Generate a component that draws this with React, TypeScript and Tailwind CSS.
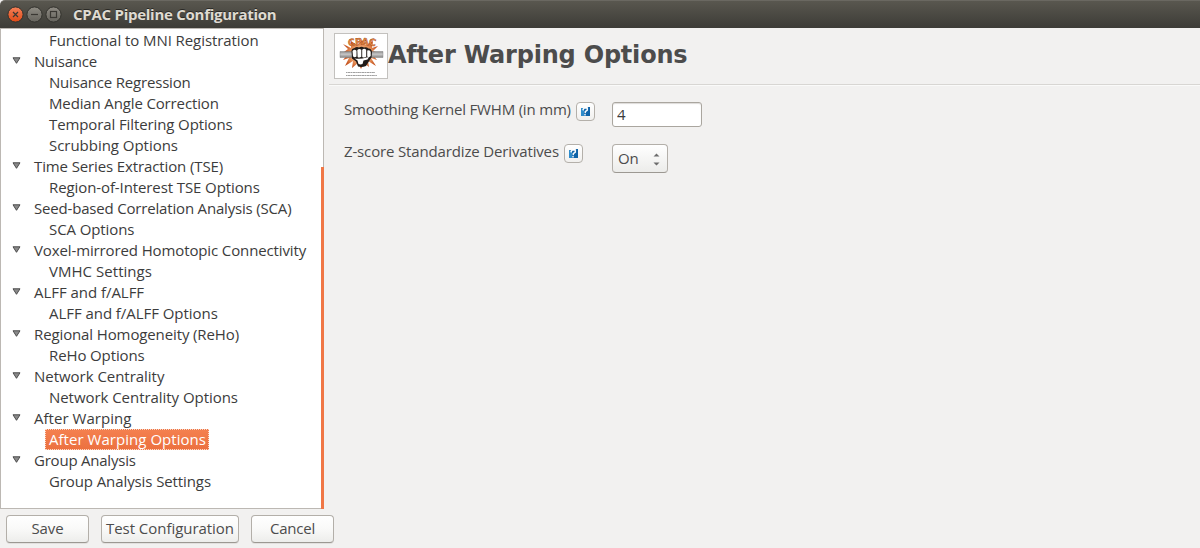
type TreeItem = { label: string; tracking: string; group?: boolean; selected?: boolean };

const items: TreeItem[] = [
  { label: "Functional to MNI Registration", tracking: "tracking-[-0.07px]" },
  { label: "Nuisance", tracking: "tracking-[-0.2px]", group: true },
  { label: "Nuisance Regression", tracking: "tracking-[-0.19px]" },
  { label: "Median Angle Correction", tracking: "tracking-[-0.14px]" },
  { label: "Temporal Filtering Options", tracking: "tracking-[-0.11px]" },
  { label: "Scrubbing Options", tracking: "tracking-[-0.03px]" },
  { label: "Time Series Extraction (TSE)", tracking: "tracking-[-0.12px]", group: true },
  { label: "Region-of-Interest TSE Options", tracking: "tracking-[-0.1px]" },
  { label: "Seed-based Correlation Analysis (SCA)", tracking: "tracking-[-0.18px]", group: true },
  { label: "SCA Options", tracking: "tracking-[-0.09px]" },
  { label: "Voxel-mirrored Homotopic Connectivity", tracking: "tracking-[-0.12px]", group: true },
  { label: "VMHC Settings", tracking: "tracking-[0.04px]" },
  { label: "ALFF and f/ALFF", tracking: "tracking-[-0.04px]", group: true },
  { label: "ALFF and f/ALFF Options", tracking: "tracking-[-0.05px]" },
  { label: "Regional Homogeneity (ReHo)", tracking: "tracking-[-0.12px]", group: true },
  { label: "ReHo Options", tracking: "tracking-[-0.12px]" },
  { label: "Network Centrality", tracking: "tracking-[-0.03px]", group: true },
  { label: "Network Centrality Options", tracking: "tracking-[-0.05px]" },
  { label: "After Warping", tracking: "tracking-[0.04px]", group: true },
  { label: "After Warping Options", tracking: "tracking-[0.04px]", selected: true },
  { label: "Group Analysis", tracking: "tracking-[-0.22px]", group: true },
  { label: "Group Analysis Settings", tracking: "tracking-[-0.1px]" },
];

function WindowButton({ kind }: { kind: "close" | "min" | "max" }) {
  const close = kind === "close";
  return (
    <svg width="17" height="17" viewBox="0 0 17 17" aria-hidden="true">
      <defs>
        <linearGradient id={"wb-" + kind} x1="0" y1="0" x2="0" y2="1">
          <stop offset="0" stopColor={close ? "#f58159" : "#8f8c84"} />
          <stop offset="1" stopColor={close ? "#df4a16" : "#65635c"} />
        </linearGradient>
      </defs>
      <circle cx="8.5" cy="8.5" r="7.6" fill={`url(#wb-${kind})`} stroke="#33322d" strokeWidth="1" />
      <g stroke="#3a3833" strokeWidth="1.2" fill="none">
        {close && <path d="M6 6l5 5M11 6l-5 5" />}
        {kind === "min" && <path d="M5 8.5h7" />}
        {kind === "max" && <rect x="5.5" y="5.5" width="6" height="6" />}
      </g>
    </svg>
  );
}

const logoLetters = [
  { ch: "C", x: 14, y: 13, turn: -12 },
  { ch: "P", x: 21, y: 12, turn: -4 },
  { ch: "A", x: 27.5, y: 12, turn: 4 },
  { ch: "C", x: 35, y: 12.5, turn: 10 },
];

function Logo() {
  return (
    <svg width="54" height="46" viewBox="0 0 54 46" className="shrink-0" aria-hidden="true">
      <defs>
        <linearGradient id="bar" x1="0" y1="0" x2="0" y2="1">
          <stop offset="0" stopColor="#8a8a8a" />
          <stop offset="0.45" stopColor="#c8c8c8" />
          <stop offset="1" stopColor="#858585" />
        </linearGradient>
        <radialGradient id="burst">
          <stop offset="0" stopColor="#f7b27e" />
          <stop offset="0.55" stopColor="#eda06a" />
          <stop offset="1" stopColor="#c4501b" />
        </radialGradient>
      </defs>
      <rect x="0.5" y="0.5" width="53" height="45" fill="#fff" stroke="#c3c1be" />
      <path
        d="M9 11l8 4 0-7 6 4 5-5 4 5 7-4-1 7 6-2-5 5 6 2-6 2 4 5-6-2 5 8-8-5 1 6-5-4-3 6-3-6-6 5 1-7-8 5 4-8-6 2 5-6-4-2 4-3z"
        fill="url(#burst)"
      />
      <path d="M6 18.500h13v6H6zM37 18.500h12v6H37z" fill="url(#bar)" stroke="#777" strokeWidth="0.4" />
      <path
        d="M17.500 18q0-2.500 3-3 2-1.500 4.500-.5 2.500-1.500 5 0 2.500-.8 4.500 1 3.500.3 3.500 4l-.5 5-3 4.500-2.500 4q-4 1.500-8 .5l-2-5-4-3z"
        fill="#211b18"
      />
      <path
        d="M18.500 18q2-2.500 4-.3v5.800q-2 1.500-3.500-.3zM23.300 17q2-2 4-.2v7q-2 1.300-3.700.2zM28.200 16.800q2-2 4 0v7q-2 1.300-4 .2zM33.200 17.500q3-1 3.500 1.500v4q-1.500 2-3.500.5zM20.500 25.500q6 1 12-1l2.500-.5-1.500 2.500-4 1 -1 3.500q-2 .8-4 0l-1-3.500z"
        fill="#fff"
      />
      <g
        fontFamily="DejaVu Sans, sans-serif"
        fontWeight="bold"
        fontSize="9.5"
        fill="#ef8b45"
        stroke="#8a431a"
        strokeWidth="0.4"
      >
        {logoLetters.map((l) => (
          <text key={l.x} x={l.x} y={l.y} transform={`rotate(${l.turn} ${l.x + 3} ${l.y - 3})`}>
            {l.ch}
          </text>
        ))}
      </g>
      <path d="M12 39.500h29M12 42.500h31" stroke="#a0a0a0" strokeWidth="1" strokeDasharray="1.500 0.400 2.500 0.300" />
    </svg>
  );
}

function HelpButton() {
  return (
    <button
      type="button"
      aria-label="Help"
      className="flex h-[19px] w-[19px] items-center justify-center rounded-[4px] border border-[#b4b0aa] bg-linear-to-b from-white to-[#f1f0ee]"
    >
      <svg width="11" height="11" viewBox="0 0 11 11">
        <path d="M1 2h3v8H1z" fill="#2f8ccb" />
        <path d="M4 2.500L7 1h3v9H4z" fill="#0f63a8" />
        <path d="M2.800 4.300L4 2h3.300v2.200L5.300 5.700v1.500M5 8v1.500" fill="none" stroke="#f4f8fb" strokeWidth="1.500" />
        <path d="M4.500 1.500h3" stroke="#fff" strokeWidth="1" />
      </svg>
    </button>
  );
}

function PushButton({ label, size }: { label: string; size: string }) {
  return (
    <button
      type="button"
      className={`flex h-[28px] items-center justify-center rounded-[4px] border border-[#b3afa9] border-b-[#9c9892] bg-linear-to-b from-white via-[#f9f9f8] to-[#ededeb] pb-px whitespace-nowrap shadow-[0_1px_0_#e2e0de] ${size}`}
    >
      {label}
    </button>
  );
}

export default function App() {
  return (
    <div className="flex h-[548px] w-[1200px] flex-col overflow-hidden bg-[#f2f1f0] font-['Open_Sans',sans-serif] text-[15px] text-[#3c3c3c]">
      <header className="flex h-[28px] shrink-0 items-center rounded-tl-[5px] border-t border-[#6a6861] bg-linear-to-b from-[#59574f] to-[#3d3c37] pl-[7px]">
        <div className="flex gap-[2px]">
          <WindowButton kind="close" />
          <WindowButton kind="min" />
          <WindowButton kind="max" />
        </div>
        <h1 className="ml-[11px] font-bold tracking-[-0.26px] whitespace-nowrap text-[#dfdbd2] [text-shadow:0_-1px_0_#2a2925]">
          CPAC Pipeline Configuration
        </h1>
      </header>

      <div className="flex h-[481px] shrink-0">
        <nav className="flex w-[324px] shrink-0 border-t border-b border-l border-[#bcb8b3] bg-white">
          <ul className="w-[320px] pt-px">
            {items.map((item) => (
              <li key={item.label} className={`flex h-[21px] items-center whitespace-nowrap ${item.tracking}`}>
                {item.group ? (
                  <>
                    <svg width="9" height="7" viewBox="0 0 9 7" className="mb-[3px] ml-[11px] shrink-0" aria-hidden="true">
                      <path d="M1 .8h7L4.500 6.300z" fill="#8a8a8a" stroke="#4c4c4c" strokeWidth="1" />
                    </svg>
                    <span className="ml-[13px] leading-[21px]">{item.label}</span>
                  </>
                ) : item.selected ? (
                  <span className="ml-[44px] h-[21px] w-[164px] border border-dotted border-[#fbd9c9] bg-linear-to-b from-[#f4804f] to-[#ec7140] pl-[3px] leading-[19px] text-white">
                    {item.label}
                  </span>
                ) : (
                  <span className="ml-[48px] leading-[21px]">{item.label}</span>
                )}
              </li>
            ))}
          </ul>
          <div className="-mb-px flex w-[3px] flex-col">
            <div className="h-[138px] border-r border-[#bcb8b3]" />
            <div className="flex-1 bg-[#f07746]" />
          </div>
        </nav>

        <main className="ml-[5px] flex-1">
          <div className="flex h-[57px] border-b border-[#d8d6d3] pt-[5px] pl-[5px]">
            <Logo />
            <h2 className="font-['DejaVu_Sans',sans-serif] text-[24px] leading-[45px] font-bold tracking-[-0.21px] whitespace-nowrap text-[#4c4c4c]">
              After Warping Options
            </h2>
          </div>
          <div className="flex flex-col gap-[13px] border-t border-[#fafaf9] pt-[16px] pl-[15px]">
            <div className="flex h-[29px] items-start">
              <div className="flex w-[268px] gap-[5px]">
                <label htmlFor="fwhm" className="leading-[15px] tracking-[-0.19px] whitespace-nowrap text-[#4c4c4c]">
                  Smoothing Kernel FWHM (in mm)
                </label>
                <HelpButton />
              </div>
              <input
                id="fwhm"
                defaultValue="4"
                className="h-[25px] w-[90px] rounded-[3px] border border-[#aaa69f] bg-white px-[4px] pb-px shadow-[inset_0_1px_1px_#dddbd9]"
              />
            </div>
            <div className="flex h-[29px] items-start">
              <div className="flex w-[268px] gap-[5px]">
                <span className="leading-[15px] tracking-[-0.15px] whitespace-nowrap text-[#4c4c4c]">
                  Z-score Standardize Derivatives
                </span>
                <HelpButton />
              </div>
              <button
                type="button"
                className="flex h-[29px] w-[56px] items-center justify-between rounded-[4px] border border-[#b3afa9] border-b-[#9c9892] bg-linear-to-b from-white to-[#ececea] pr-[7px] pl-[5px] tracking-[-0.2px] text-[#4c4c4c]"
              >
                On
                <svg width="7" height="13" viewBox="0 0 7 13" className="mt-[2px]" aria-hidden="true">
                  <path d="M.5 3.500L3.500.5l3 3zM.5 9.500l3 3 3-3z" fill="#6c6c6c" />
                </svg>
              </button>
            </div>
          </div>
        </main>
      </div>

      <footer className="flex gap-[12px] pt-[6px] pl-[6px] text-[#4c4c4c]">
        <PushButton label="Save" size="w-[83px] tracking-[-0.12px]" />
        <PushButton label="Test Configuration" size="w-[138px] tracking-[-0.04px]" />
        <PushButton label="Cancel" size="w-[83px] tracking-[-0.23px]" />
      </footer>
    </div>
  );
}
